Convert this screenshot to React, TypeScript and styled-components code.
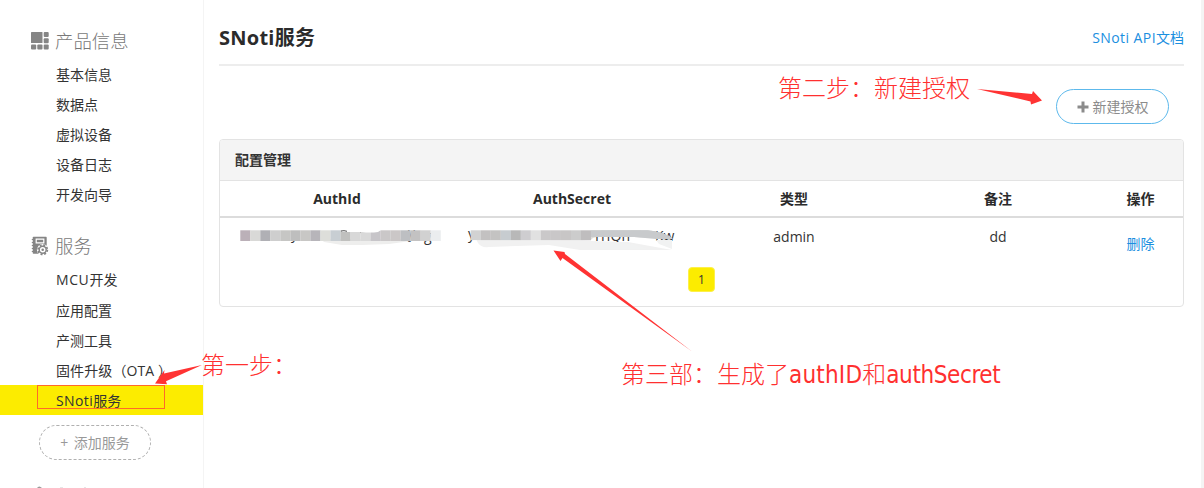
import React from 'react';
import styled, { createGlobalStyle, css } from 'styled-components';

const Global = createGlobalStyle`
  * { box-sizing: border-box; }
  html, body { margin: 0; background: #fff; overflow: hidden; }
  body { font: 14px/20px "Open Sans", "Noto Sans CJK SC", sans-serif; color: #333; }
`;

const Page = styled.div`
  position: relative;
  display: flex;
  width: 1204px;
  height: 488px;
  overflow: hidden;
  border-right: 3px solid #f4f4f4;
`;
const Sidebar = styled.nav`
  flex: none;
  width: 204px;
  padding-top: 23px;
  border-right: 1px solid #f4f4f4;
`;
const Section = styled.section`
  display: flex;
  flex-direction: column;
  & + & { margin-top: 19px; }
`;
const SectionTitle = styled.h3`
  display: flex;
  align-items: center;
  gap: 6px;
  height: 36px;
  margin: 0;
  padding-left: 31px;
  font-size: 18.4px;
  font-weight: 300;
  line-height: 36px;
  color: #787878;
  svg { flex: none; }
`;
const Item = styled.a<{ $active?: boolean }>`
  display: block;
  height: 30.1px;
  padding-left: 56px;
  line-height: 31px;
  white-space: nowrap;
  ${p => p.$active && css`background: #fcec00;`}
`;
const Spaced = styled.span<{ $by: number }>`
  letter-spacing: ${p => p.$by}px;
`;
const AddService = styled.button`
  width: 112px;
  height: 35px;
  margin: 10px 0 0 39px;
  padding: 2px 0 0;
  border: 1px dashed #b0b0b0;
  border-radius: 18px;
  background: none;
  font: inherit;
  word-spacing: 2px;
  color: #999;
`;
const Main = styled.main`
  flex: 1;
  padding: 11px 17px 0 15px;
`;
const Header = styled.header`
  display: flex;
  align-items: center;
  justify-content: space-between;
  height: 55px;
  border-bottom: 2px solid #ededed;
`;
const Title = styled.h1`
  margin: 0;
  font-size: 20px;
  line-height: 28px;
  letter-spacing: 0.25px;
  color: #2b2b2b;
`;
const Link = styled.a`
  color: #1b8fdf;
`;
const Toolbar = styled.div`
  display: flex;
  justify-content: flex-end;
  padding: 23px 15px 15px 0;
`;
const CreateButton = styled.button`
  display: flex;
  align-items: center;
  justify-content: center;
  gap: 4px;
  width: 113px;
  height: 35px;
  padding: 0;
  border: 1px solid #5db9ec;
  border-radius: 18px;
  background: #fff;
  font: inherit;
  color: #8b8b8b;
`;
const Panel = styled.section`
  height: 168px;
  border: 1px solid #e3e3e3;
  border-radius: 4px;
  overflow: hidden;
`;
const PanelTitle = styled.h2`
  height: 41px;
  margin: 0;
  padding-left: 15px;
  border-bottom: 1px solid #e3e3e3;
  background: #f4f4f4;
  font-size: 14px;
  line-height: 39px;
`;
const Row = styled.div<{ $head?: boolean }>`
  display: grid;
  grid-template-columns: 234px 236px 208px 200px 1fr;
  text-align: center;
  height: ${p => (p.$head ? 37 : 49)}px;
  line-height: ${p => (p.$head ? 35 : 37)}px;
  ${p => p.$head && css`font-weight: 700; color: #2b2b2b; border-bottom: 2px solid #dcdcdc;`}
`;
const Cell = styled.div<{ $drop?: number }>`
  padding-top: ${p => p.$drop ?? 0}px;
  svg { display: block; }
`;
const Pager = styled.div`
  display: flex;
  justify-content: center;
`;
const PageNumber = styled.a`
  width: 27px;
  height: 25px;
  border: 1px solid #fdf04a;
  border-radius: 4px;
  background: #fcec00;
  font-size: 12px;
  line-height: 24px;
  text-align: center;
`;
const Overlay = styled.svg`
  position: absolute;
  inset: 0;
  pointer-events: none;
`;
const Highlight = styled.div`
  position: absolute;
  left: 37px;
  top: 385px;
  width: 128px;
  height: 24px;
  border: 1px solid #ff6a2a;
`;
const Note = styled.p<{ $x: number; $y: number }>`
  position: absolute;
  left: ${p => p.$x}px;
  top: ${p => p.$y}px;
  margin: 0;
  font: 300 24px/32px "Noto Sans CJK SC", sans-serif;
  color: #ff3030;
  white-space: nowrap;
`;
const Latin = styled.span<{ $tracking: number }>`
  font-family: "DejaVu Sans Condensed", "DejaVu Sans", sans-serif;
  font-stretch: condensed;
  font-weight: 400;
  letter-spacing: ${p => p.$tracking}px;
`;

const GridIcon = () => (
  <svg width="18" height="18" viewBox="0 0 18 18" fill="#858585">
    <rect width="11.5" height="11" rx=".6" />
    <rect x="12.7" width="5" height="5" rx="1" /><rect x="12.7" y="6.3" width="5" height="5" rx="1" />
    <rect y="12.5" width="5.2" height="5" rx="1" /><rect x="6.3" y="12.5" width="5.2" height="5" rx="1" />
    <rect x="12.7" y="12.5" width="5" height="5" rx="1" />
  </svg>
);
const ServiceIcon = () => (
  <svg width="18" height="20" viewBox="0 0 18 20">
    <path fill="#858585" d="M2.500.7h12.500q.7 0 .7.7v16.300H2.500q-.8 0-.8-.8V16H.8v-1h.9v-2H.8v-1h.9v-2H.8V9h.9V7H.8V6h.9V4H.8V3h.9V1.500q0-.8.8-.8z" />
    <path fill="none" stroke="#fff" strokeWidth="1.200" d="M5.200 3.200h7.600v3.600H5.200z" />
    <circle cx="11.700" cy="13.800" r="5.800" fill="#fff" />
    <circle cx="11.700" cy="13.800" r="4.700" fill="none" stroke="#858585" strokeWidth="1.600" strokeDasharray="2 1.690" />
    <circle cx="11.700" cy="13.800" r="3.500" fill="none" stroke="#858585" strokeWidth="1.500" />
    <circle cx="11.700" cy="13.800" r="1.300" fill="#858585" />
  </svg>
);
const PlusIcon = () => (
  <svg width="12" height="12" viewBox="0 0 12 12"><path fill="#8b8b8b" d="M4.500.5h3v4h4v3h-4v4h-3v-4h-4v-3h4z" /></svg>
);

const idTiles = ['#bbb0b8', '#d9d9d7', '#b0b0b5', '#cecece', '#c6c6c4', '#bebebe', '#c8c7c5', '#b7b5ba', '#dddeda', '#c8ced3', '#c0c0be', '#d8d8d8', '#d9d9d9', '#c7c5c9', '#cac7c8', '#cbc7c7', '#bdbfc2', '#c3c2c2', '#d1d1d1', '#ebedef'];
const secretTiles = ['#d2d2d2', '#c3c1c1', '#c4c3c2', '#c7ccd0', '#b8b8b8', '#cecdd0', '#e1e1e1', '#cac8c9', '#c9c7c8', '#c8c6c6', '#cccccc', '#bfbdbe', '#dcdbd6', '#c9ced2', '#c9cbcd', '#cac9ca', '#c4c5c4', '#c8cbce', '#bdbdbd', '#cccccc'];

const MaskedId = () => (
  <svg width="234" height="38" viewBox="220 218 234 38">
    <g fontFamily="Open Sans" fontSize="14" fill="#333">
      <text x="291" y="239">y</text><text x="356" y="240">p</text><text x="408" y="238">y</text><text x="424" y="241">g</text>
    </g>
    <path fill="#eeeeed" d="M321 239h90v2l-22 3-27 1h-20l-18-3z" />
    {idTiles.map((c, i) => <rect key={i} x={240.300 + i * 10.020} y="230.300" width="10.1" height="10.700" fill={c} />)}
    <path fill="#fff" d="M341 230h40l-3 2q-8 1-16 0h-20z" />
    <path fill="none" stroke="#555" strokeWidth="1" d="M341 231q3-.8 6 .3" />
  </svg>
);
const MaskedSecret = () => (
  <svg width="236" height="38" viewBox="454 218 236 38">
    <g fontFamily="Open Sans" fontSize="14" fill="#333">
      <text x="468" y="239">y</text>
    </g>
    <path fill="#f1f1f1" d="M476 239h75l60 2 61 2v7H580l-31-5-60 2q-8 1-11-4z" />
    {secretTiles.map((c, i) => <rect key={i} x={470.700 + i * 10.020} y="230.300" width="10.1" height="9.800" fill={c} />)}
    <path fill="#fff" d="M591 240q1-3 8-3h35q28 0 39 6l-1 7-44-8-37-1zM648 230h24v9q-6-6-24-9z" />
    <g fontFamily="Open Sans" fontSize="14" fill="#333">
      <text x="595" y="241">ITIQn</text><text x="655" y="241">Kw</text>
    </g>
    <path fill="#c8cacc" d="M591 230.300h56q18 1 26 8.700h-17l-22-2h-43z" />
    <path fill="#f1f2f2" d="M600 242h22l27 7h-49zM656 240h16v9l-13-5z" />
  </svg>
);

const product = ['基本信息', '数据点', '虚拟设备', '设备日志', '开发向导'];
const services = [
  { name: 'MCU', rest: '开发', by: 0.6 },
  { name: '', rest: '应用配置', by: 0 },
  { name: '', rest: '产测工具', by: 0 },
  { name: '固件升级（OTA ）', rest: '', by: 0.1 },
  { name: 'SNoti', rest: '服务', by: 0.4, active: true },
];

export default function App() {
  return (
    <Page>
      <Global />
      <Sidebar>
        <Section>
          <SectionTitle><GridIcon />产品信息</SectionTitle>
          {product.map(t => <Item key={t}>{t}</Item>)}
        </Section>
        <Section>
          <SectionTitle><ServiceIcon />服务</SectionTitle>
          {services.map(s => (
            <Item key={s.name + s.rest} $active={s.active}><Spaced $by={s.by}>{s.name}</Spaced>{s.rest}</Item>
          ))}
          <AddService>+ 添加服务</AddService>
        </Section>
      </Sidebar>
      <Main>
        <Header><Title>SNoti服务</Title><Link><Spaced $by={0.43}>SNoti API</Spaced>文档</Link></Header>
        <Toolbar><CreateButton><PlusIcon />新建授权</CreateButton></Toolbar>
        <Panel>
          <PanelTitle>配置管理</PanelTitle>
          <Row $head><Cell>AuthId</Cell><Cell>AuthSecret</Cell><Cell>类型</Cell><Cell>备注</Cell><Cell>操作</Cell></Row>
          <Row><Cell><MaskedId /></Cell><Cell><MaskedSecret /></Cell><Cell>admin</Cell><Cell>dd</Cell><Cell $drop={7}><Link>删除</Link></Cell></Row>
          <Pager><PageNumber>1</PageNumber></Pager>
        </Panel>
      </Main>
      <Highlight />
      <Note $x={201} $y={348}>第一步：</Note>
      <Note $x={778} $y={71}>第二步：新建授权</Note>
      <Note $x={621} $y={357}>第三部：生成了<Latin $tracking={0.2}>authID</Latin>和<Latin $tracking={-0.4}>authSecret</Latin></Note>
      <Overlay width="1204" height="488">
        <g fill="#ff3333">
          <path d="M202 365L164 373.500l.5-3.500-9.500 13.500 12 .8-1-3z" />
          <path d="M977 89l55 5 1-3 9 9.500-11 4-.5-3z" />
          <path d="M692 351.500L565 254l-.5-2-11-1.500 7 10.500 2-3z" />
        </g>
        <path fill="#999" d="M37 488q2-3 5 0zM60 487.500h3v.5h-3zM84 487.500h2v.5h-2z" />
        <path fill="#fff" d="M30 486.400h6v2h-6zM43 484h60v3.500H43z" />
      </Overlay>
    </Page>
  );
}
